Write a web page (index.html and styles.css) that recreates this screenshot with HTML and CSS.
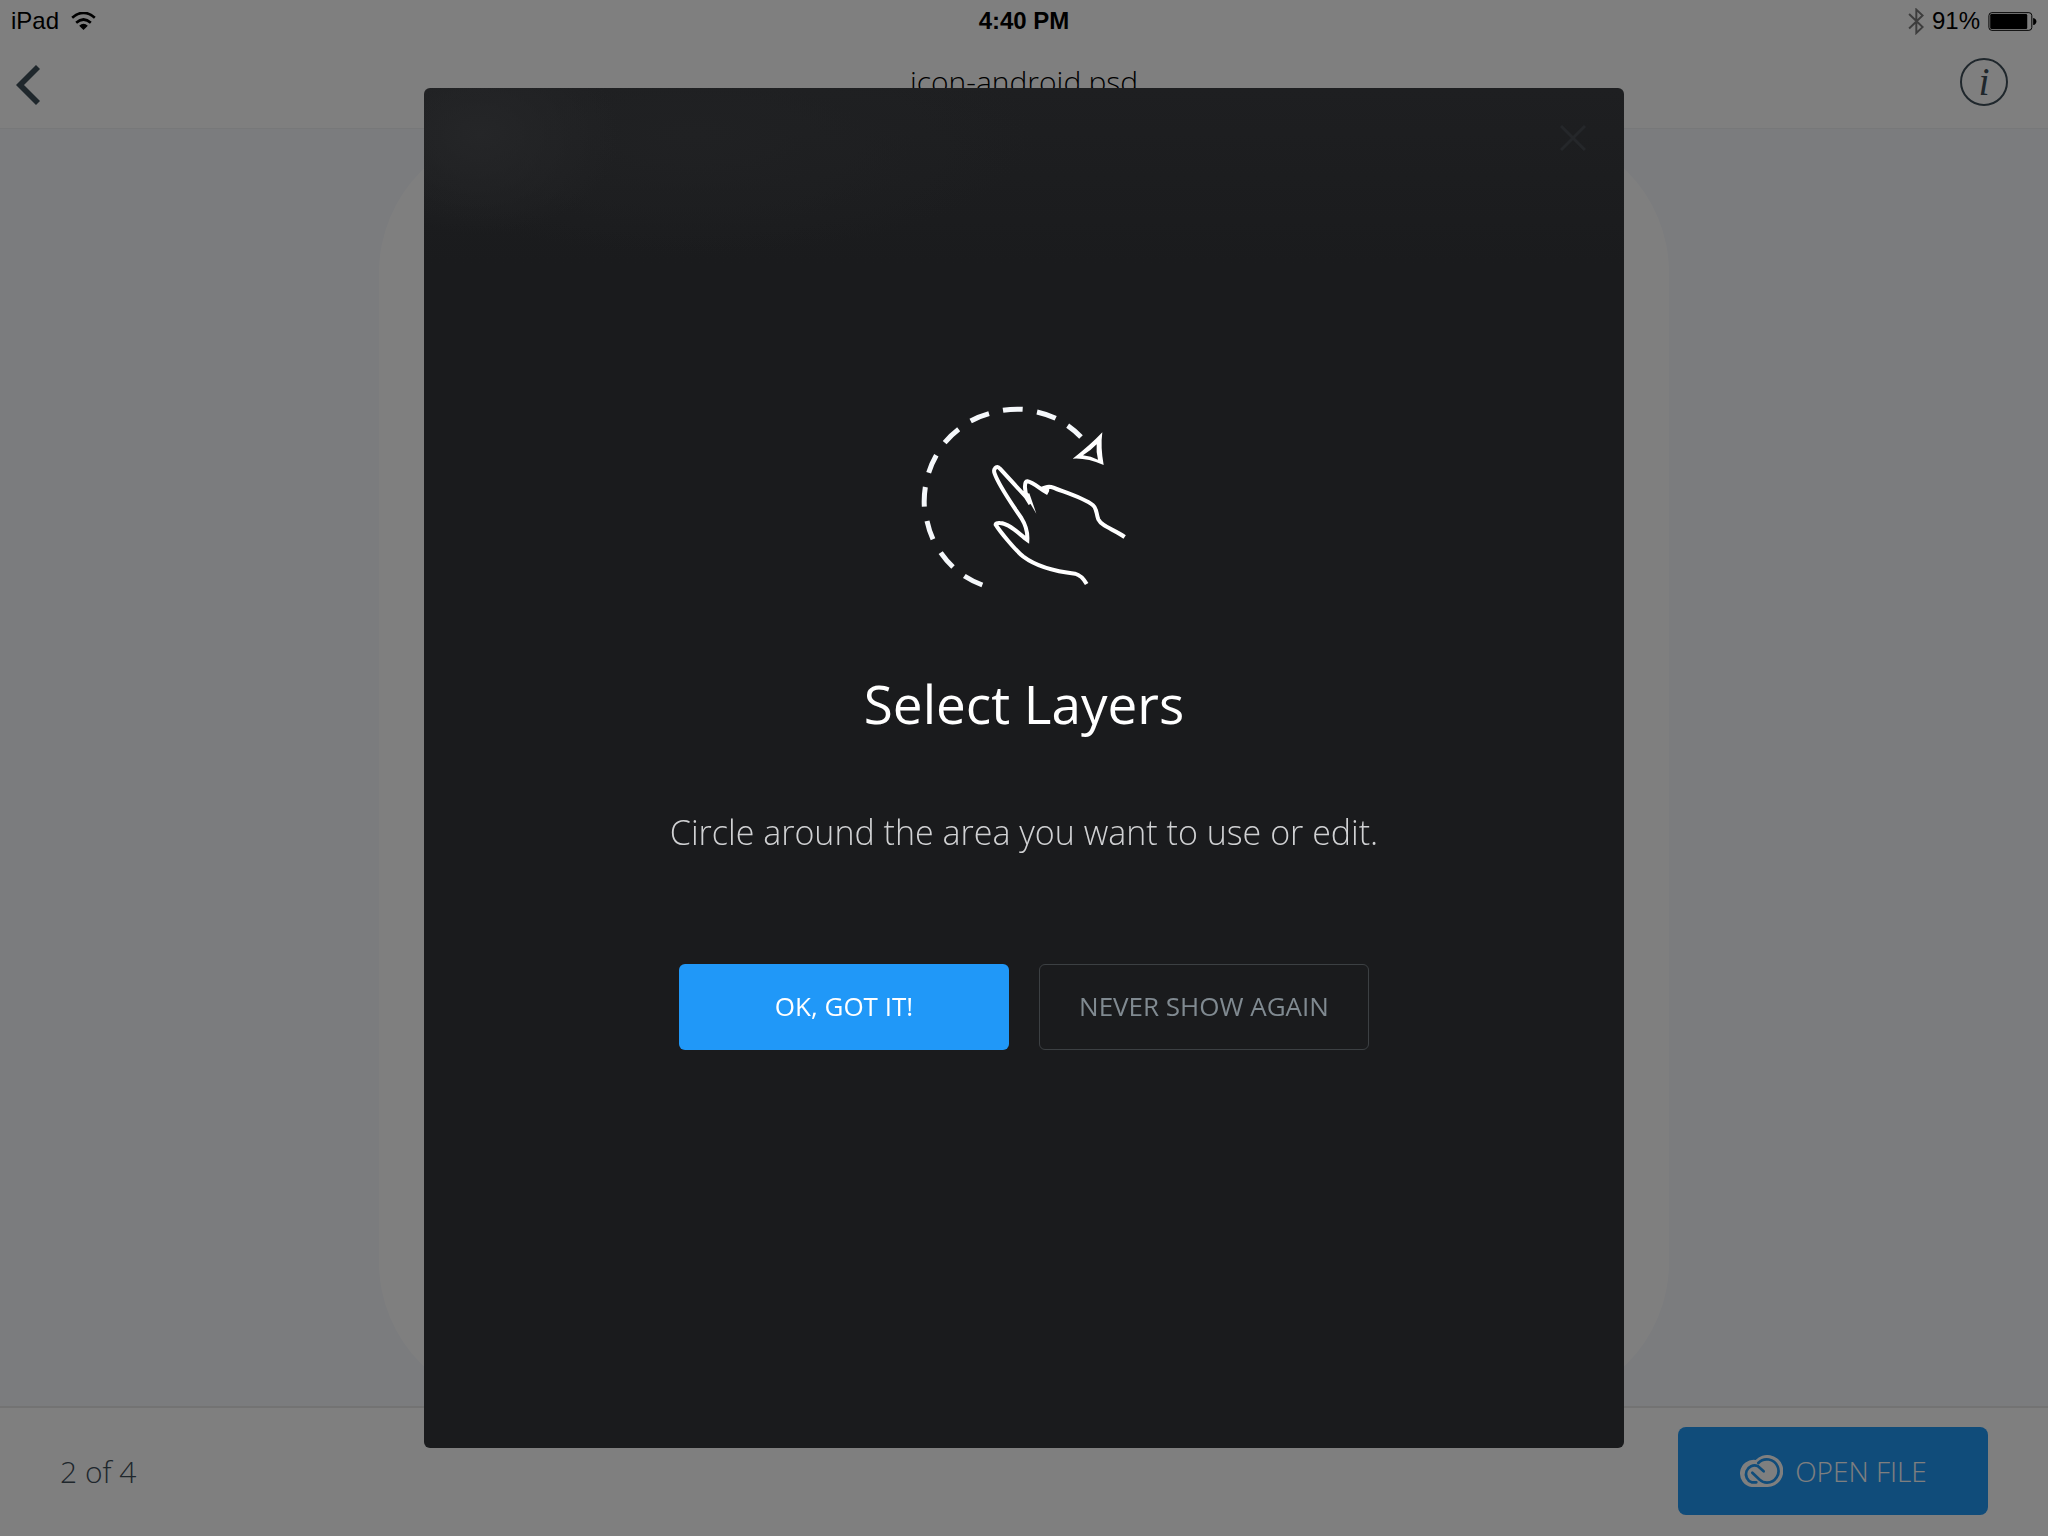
FILE: index.html
```html
<!DOCTYPE html>
<html lang="en">
<head>
<meta charset="utf-8">
<title>icon-android.psd</title>
<link rel="stylesheet" href="styles.css">
</head>
<body>
<div class="app">
  <header class="header">
    <div class="status">
      <div class="status-left">
        <span>iPad</span>
        <svg class="wifi" viewBox="0 0 74 54" aria-hidden="true"><path d="M3 17Q37-12 71 17" fill="none" stroke="#000" stroke-width="8"/><path d="M15 32Q37 13 59 32" fill="none" stroke="#000" stroke-width="8"/><path d="M24 41Q37 30 50 41L37 54Z"/></svg>
      </div>
      <span class="clock">4:40 PM</span>
      <div class="status-right">
        <svg class="bluetooth" viewBox="0 0 48 82" aria-hidden="true"><path d="M3 18 44 58 25 76V5L44 23 3 62" fill="none" stroke="#7a7a7a" stroke-width="6"/></svg>
        <span>91%</span>
        <svg class="battery" viewBox="0 0 148 58" aria-hidden="true"><rect x="2" y="2" width="131" height="54" rx="9" fill="none" stroke="#000" stroke-width="3"/><rect x="6" y="6" width="113" height="46" rx="4"/><path d="M137 18Q147 20 147 29T137 40Z"/></svg>
      </div>
    </div>
    <nav class="nav">
      <button class="back-button" type="button" aria-label="Back"><svg class="back" viewBox="0 0 72 120" aria-hidden="true"><path d="M66 6 12 60 66 114" fill="none" stroke="#3f4e59" stroke-width="17"/></svg></button>
      <h1 class="title">icon-android.psd</h1>
      <button class="info" type="button" aria-label="Information">i</button>
    </nav>
  </header>
  <main class="canvas"><div class="artboard"></div></main>
  <footer class="footer">
    <span class="pager">2 of 4</span>
    <button class="open-file" type="button">
      <svg class="cloud" viewBox="0 0 132 96" aria-hidden="true">
        <path fill="#fff" d="M38 96A39 39 0 1 1 50 15A48 48 0 1 1 84 96Z"/>
        <g fill="none" stroke="#2098f5" stroke-width="8" stroke-linecap="round">
          <path d="M74 49 56 33A25 25 0 1 0 38 82H52"/>
          <path d="M40 53 62 74Q71 83 84 83A35 35 0 1 0 58 24"/>
        </g>
      </svg>
      <span>OPEN FILE</span>
    </button>
  </footer>
</div>
<div class="overlay">
  <section class="modal" role="dialog" aria-modal="true" aria-labelledby="modal-title">
    <button class="close" type="button" aria-label="Close"><svg viewBox="0 0 26 26" width="26" height="26" aria-hidden="true"><path d="M1 1 25 25M25 1 1 25" stroke="#25272a" stroke-width="3"/></svg></button>
    <svg class="gesture" viewBox="0 0 720 630" aria-hidden="true">
      <g fill="none" stroke="#f5f8fb" stroke-width="15">
        <path d="M247 585A273 273 0 0 1 193 558M159 531A273 273 0 0 1 122 488M99 448A273 273 0 0 1 81 393M73 350A273 273 0 0 1 76 291M86 248A273 273 0 0 1 109 196M134 158A273 273 0 0 1 176 118M212 93A273 273 0 0 1 267 71M309 61A273 273 0 0 1 368 58M411 66A273 273 0 0 1 467 85M503 107A273 273 0 0 1 543 141"/>
      </g>
      <path fill="#fff" fill-rule="evenodd" d="M518 206Q570 166 607 127Q601 170 611 225Q560 203 518 206ZM549 196Q572 182 590 163Q588 185 594 209Q573 199 549 196Z"/>
      <path fill="none" stroke="#fff" stroke-width="12" stroke-miterlimit="10" d="M674 441C640 417 606 410 595 388C588 372 592 357 579 346C550 322 482 303 460 293Q448 288 437 292Q445 297 439 307C420 297 400 277 382 274C371 275 374 305 382 324L391 342L378 321L300 236Q292 226 285 235Q280 240 284 251C296 285 330 335 364 384Q384 416 382 450C360 435 330 400 300 399Q286 398 287 404C300 425 345 480 370 500C410 530 470 545 525 551Q545 556 560 582"/>
      <path fill="#fff" d="M374 312 388 310 409 371Z"/>
    </svg>
    <h2 class="modal-title" id="modal-title">Select Layers</h2>
    <p class="modal-text">Circle around the area you want to use or edit.</p>
    <div class="actions">
      <button class="action primary" type="button">OK, GOT IT!</button>
      <button class="action secondary" type="button">NEVER SHOW AGAIN</button>
    </div>
  </section>
</div>
</body>
</html>
```
FILE: styles.css
```css
* { box-sizing: border-box; }
body {
  margin: 0;
  font-family: "Open Sans", "Noto Sans", sans-serif;
  color: #3f4e59;
}
button {
  margin: 0;
  padding: 0;
  border: 0;
  background: none;
  color: inherit;
  font: inherit;
}
svg { display: block; }
.app {
  display: flex;
  flex-direction: column;
  min-height: 100vh;
  background: #fff;
}
.header { border-bottom: 1px solid #eef0f2; }
.status {
  display: grid;
  grid-template-columns: 1fr auto 1fr;
  align-items: center;
  height: 42px;
  padding: 0 11px;
  font: 24px/42px "Liberation Sans", sans-serif;
  color: #000;
}
.status-left, .status-right {
  display: flex;
  align-items: center;
  gap: 12px;
}
.status-right {
  justify-content: flex-end;
  gap: 8px;
}
.clock { font-weight: bold; }
.wifi { width: 25px; height: 18px; }
.bluetooth { width: 16px; height: 27px; }
.battery { width: 49px; height: 19px; }
.nav {
  display: grid;
  grid-template-columns: 1fr auto 1fr;
  align-items: center;
  height: 86px;
  padding: 0 16px;
}
.back-button { justify-self: start; }
.back { width: 24px; height: 40px; }
.title {
  margin: 0 0 6px;
  font-size: 30px;
  line-height: 80px;
  font-weight: 300;
  color: #000;
}
.info {
  justify-self: end;
  width: 48px;
  height: 48px;
  margin: 0 24px 6px;
  border: 2px solid #3f4e59;
  border-radius: 50%;
  font: italic 40px/44px "Liberation Serif", serif;
}
.canvas {
  flex: 1;
  display: flex;
  justify-content: center;
  background: #f7f9fd;
}
.artboard {
  width: 63%;
  border-radius: 144px;
  background: #fff;
}
.footer {
  display: flex;
  align-items: center;
  justify-content: space-between;
  height: 130px;
  padding: 0 60px 2px;
  border-top: 2px solid #e6e6e6;
}
.pager {
  font-size: 30px;
  font-weight: 300;
}
.open-file {
  display: flex;
  align-items: center;
  justify-content: center;
  gap: 12px;
  width: 310px;
  height: 88px;
  border-radius: 8px;
  background: #2098f5;
  color: #fff;
  font-size: 28px;
  font-weight: 300;
}
.cloud { width: 44px; height: 32px; }
.overlay {
  position: fixed;
  inset: 0;
  display: flex;
  justify-content: center;
  padding: 88px 24px;
  background: rgba(0, 0, 0, 0.5);
}
.modal {
  position: relative;
  display: flex;
  flex-direction: column;
  align-items: center;
  width: 100%;
  max-width: 1200px;
  padding-top: 302px;
  border-radius: 6px;
  background:
    radial-gradient(ellipse 140px 100px at 56px 46px, #252628, transparent),
    radial-gradient(ellipse 340px 120px at 270px 46px, #202123, transparent),
    linear-gradient(#1e1f21, #1a1b1d 176px);
  color: #fff;
}
.close {
  position: absolute;
  top: 37px;
  right: 38px;
}
.gesture { width: 240px; height: 210px; margin-left: -8px; }
.modal-title {
  margin: 64px 0 0;
  font-size: 53px;
  line-height: 80px;
  font-weight: 400;
}
.modal-text {
  margin: 56px 0 0;
  font-size: 34px;
  line-height: 64px;
  font-weight: 300;
  color: #d0d1d3;
}
.actions {
  display: flex;
  gap: 30px;
  margin-top: 100px;
}
.action {
  width: 330px;
  height: 86px;
  padding-bottom: 2px;
  border-radius: 6px;
  font-size: 26px;
}
.primary { background: #2098f8; }
.secondary {
  border: 1px solid #3c4043;
  color: #808a91;
}
```
